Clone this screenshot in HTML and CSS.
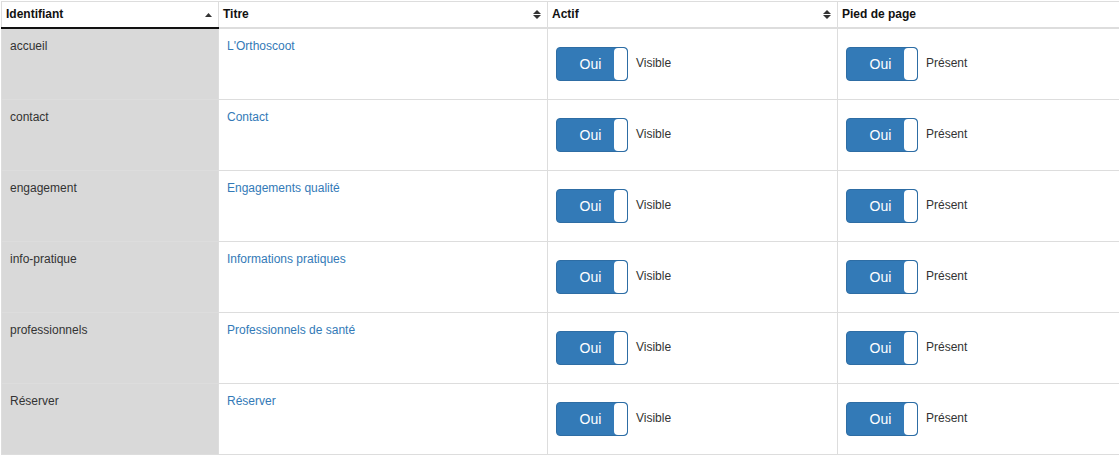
FILE: index.html
```html
<!DOCTYPE html>
<html lang="fr">
<head>
<meta charset="utf-8">
<title>Pages</title>
<link rel="stylesheet" href="styles.css">
</head>
<body>
<table class="grid">
  <colgroup>
    <col class="c1"><col class="c2"><col class="c3"><col class="c4">
  </colgroup>
  <thead>
    <tr>
      <th class="sorted"><div class="th-in"><span>Identifiant</span>
        <svg class="sort" width="7" height="4" viewBox="0 0 7 4"><polygon points="0,4 3.5,0 7,4" fill="#333"/></svg></div></th>
      <th><div class="th-in"><span>Titre</span>
        <svg class="sort" width="8" height="9" viewBox="0 0 8 9"><polygon points="0,4 4,0 8,4" fill="#333"/><polygon points="0,5 8,5 4,9" fill="#333"/></svg></div></th>
      <th><div class="th-in"><span>Actif</span>
        <svg class="sort" width="8" height="9" viewBox="0 0 8 9"><polygon points="0,4 4,0 8,4" fill="#333"/><polygon points="0,5 8,5 4,9" fill="#333"/></svg></div></th>
      <th><div class="th-in"><span>Pied de page</span></div></th>
    </tr>
  </thead>
  <tbody>
    <tr>
      <td class="id">accueil</td>
      <td><a href="#">L'Orthoscoot</a></td>
      <td><div class="sw"><span class="toggle"><span class="on">Oui</span><span class="handle"></span></span><span class="lbl">Visible</span></div></td>
      <td><div class="sw"><span class="toggle"><span class="on">Oui</span><span class="handle"></span></span><span class="lbl">Présent</span></div></td>
    </tr>
    <tr>
      <td class="id">contact</td>
      <td><a href="#">Contact</a></td>
      <td><div class="sw"><span class="toggle"><span class="on">Oui</span><span class="handle"></span></span><span class="lbl">Visible</span></div></td>
      <td><div class="sw"><span class="toggle"><span class="on">Oui</span><span class="handle"></span></span><span class="lbl">Présent</span></div></td>
    </tr>
    <tr>
      <td class="id">engagement</td>
      <td><a href="#">Engagements qualité</a></td>
      <td><div class="sw"><span class="toggle"><span class="on">Oui</span><span class="handle"></span></span><span class="lbl">Visible</span></div></td>
      <td><div class="sw"><span class="toggle"><span class="on">Oui</span><span class="handle"></span></span><span class="lbl">Présent</span></div></td>
    </tr>
    <tr>
      <td class="id">info-pratique</td>
      <td><a href="#">Informations pratiques</a></td>
      <td><div class="sw"><span class="toggle"><span class="on">Oui</span><span class="handle"></span></span><span class="lbl">Visible</span></div></td>
      <td><div class="sw"><span class="toggle"><span class="on">Oui</span><span class="handle"></span></span><span class="lbl">Présent</span></div></td>
    </tr>
    <tr>
      <td class="id">professionnels</td>
      <td><a href="#">Professionnels de santé</a></td>
      <td><div class="sw"><span class="toggle"><span class="on">Oui</span><span class="handle"></span></span><span class="lbl">Visible</span></div></td>
      <td><div class="sw"><span class="toggle"><span class="on">Oui</span><span class="handle"></span></span><span class="lbl">Présent</span></div></td>
    </tr>
    <tr>
      <td class="id">Réserver</td>
      <td><a href="#">Réserver</a></td>
      <td><div class="sw"><span class="toggle"><span class="on">Oui</span><span class="handle"></span></span><span class="lbl">Visible</span></div></td>
      <td><div class="sw"><span class="toggle"><span class="on">Oui</span><span class="handle"></span></span><span class="lbl">Présent</span></div></td>
    </tr>
  </tbody>
</table>
</body>
</html>
```

FILE: styles.css
```css
html, body {
  margin: 0;
  background: #fff;
}
body {
  padding: 1px 0 0 1px;
  font-family: "Liberation Sans", Arial, sans-serif;
  font-size: 12px;
  line-height: 1.42857;
  color: #333;
}
.grid {
  border-collapse: collapse;
  table-layout: fixed;
  width: 1118px;
  border-top: 1px solid #ddd;
  border-left: 1px solid #ddd;
}
.c1 { width: 217px; }
.c2 { width: 329px; }
.c3 { width: 290px; }
.c4 { width: 282px; }

th {
  text-align: left;
  font-weight: bold;
  color: #111;
  padding: 4px 6px 4px 4px;
  border-right: 1px solid #ddd;
  border-bottom: 2px solid #ddd;
  vertical-align: middle;
}
th:last-child { border-right: none; }
th.sorted { border-bottom-color: #111; }
.th-in {
  display: flex;
  align-items: center;
  justify-content: space-between;
}
.sort { display: block; flex: none; }

td {
  padding: 9px 8px 8px;
  vertical-align: top;
  border-right: 1px solid #ddd;
  border-bottom: 1px solid #ddd;
}
td:last-child { border-right: none; }
td.id { background: #d9d9d9; }
a { color: #337ab7; text-decoration: none; }

.sw {
  display: flex;
  align-items: flex-start;
  margin: 9px 0 10px;
}
.toggle {
  display: flex;
  box-sizing: border-box;
  width: 72px;
  height: 34px;
  border: 1px solid #2e6da4;
  border-radius: 4px;
  background: #337ab7;
  overflow: hidden;
}
.on {
  flex: 1;
  color: #fff;
  font-size: 14px;
  line-height: 32px;
  text-align: center;
  padding-left: 10px;
}
.handle {
  width: 13px;
  height: 32px;
  background: #fff;
  border-radius: 4px;
}
.lbl {
  margin-left: 8px;
  margin-top: 8px;
}
```
